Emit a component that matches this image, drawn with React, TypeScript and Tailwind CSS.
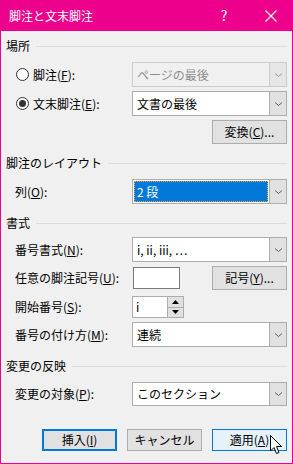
import React from "react"

const font = { fontFamily: '"Noto Sans CJK JP", "Noto Sans", sans-serif' }

function Chevron({ color = "#606060" }: { color?: string }) {
  return (
    <svg width="9" height="6" viewBox="0 0 9 6">
      <path d="M1 1.5 L4.5 4.5 L8 1.5" fill="none" stroke={color} strokeWidth="1" />
    </svg>
  )
}

function Header({ title }: { title: string }) {
  return (
    <div className="flex items-center h-[18px]">
      <span className="text-[12px] leading-none text-black">{title}</span>
      <div className="flex-1 h-px bg-[#dcdcdc] ml-[6px]" />
    </div>
  )
}

function Select({ value, disabled, selected }: { value: string; disabled?: boolean; selected?: boolean }) {
  return (
    <div
      className={
        "w-[155px] h-full flex border " +
        (disabled ? "border-[#cccccc] bg-[#f0f0f0]" : "border-[#adadad] bg-white")
      }
    >
      <div className="flex-1 flex items-center p-[1px]">
        {selected ? (
          <div className="w-full h-full bg-[#0078d7] outline outline-1 outline-dotted outline-[#ff9c40] -outline-offset-1 flex items-center pl-[3px] text-white text-[12px]">
            2 段
          </div>
        ) : (
          <span className={"pl-[3px] text-[12px] " + (disabled ? "text-[#8d8d8d]" : "text-black")}>{value}</span>
        )}
      </div>
      <div
        className={
          "w-[17px] flex items-center justify-center border-l " +
          (disabled ? "bg-[#e6e6e6] border-[#cccccc]" : "bg-[#e1e1e1] border-[#adadad]")
        }
      >
        <Chevron color={disabled ? "#9a9a9a" : "#606060"} />
      </div>
    </div>
  )
}

function Btn({ children, variant }: { children: React.ReactNode; variant?: "default" | "hover" }) {
  const cls =
    variant === "default"
      ? "border-2 border-[#0078d7] bg-[#e1e1e1]"
      : variant === "hover"
      ? "border border-[#0078d7] bg-[#e5f1fb]"
      : "border border-[#adadad] bg-[#e1e1e1]"
  return (
    <div className={"w-[75px] h-full flex items-center justify-center text-[12px] text-black " + cls}>
      {children}
    </div>
  )
}

function Row({ label, children, className = "" }: { label: React.ReactNode; children: React.ReactNode; className?: string }) {
  return (
    <div className={"flex items-center pl-[9px] " + className}>
      <span className="flex-1 text-[12px] text-black">{label}</span>
      {children}
    </div>
  )
}

function Radio({ checked }: { checked?: boolean }) {
  return (
    <div className="w-[13px] h-[13px] rounded-full border border-[#333333] bg-white flex items-center justify-center mr-[4px]">
      {checked && <div className="w-[7px] h-[7px] rounded-full bg-[#333333]" />}
    </div>
  )
}

export default function App() {
  return (
    <div className="w-[293px] h-[464px] flex flex-col relative" style={font}>
      {/* Title bar */}
      <div className="h-[31px] bg-[#ec008c] flex items-center pl-[9px] text-white shrink-0">
        <span className="text-[12px] flex-1">脚注と文末脚注</span>
        <span className="text-[14px] w-[20px] mr-[31px] text-center">?</span>
        <svg width="12" height="12" viewBox="0 0 12 12" className="mr-[16px]">
          <path d="M0.5 0.5 L11.5 11.5 M11.5 0.5 L0.5 11.5" stroke="white" strokeWidth="1.2" />
        </svg>
      </div>

      {/* Body */}
      <div className="flex-1 bg-[#f0f0f0] border-x border-b border-[#ec008c] px-[5px] flex flex-col">
        <div className="mt-[6px]">
          <Header title="場所" />
        </div>

        <div className="flex items-center mt-[7px] h-[25px]">
          <div className="flex-1 flex items-center pl-[10px]">
            <Radio />
            <span className="text-[12px] text-black">
              脚注(<span className="underline">F</span>):
            </span>
          </div>
          <Select value="ページの最後" disabled />
        </div>

        <div className="flex items-center mt-[4px] h-[25px]">
          <div className="flex-1 flex items-center pl-[10px]">
            <Radio checked />
            <span className="text-[12px] text-black">
              文末脚注(<span className="underline">E</span>):
            </span>
          </div>
          <Select value="文書の最後" />
        </div>

        <div className="flex justify-end mt-[4px] h-[24px]">
          <Btn>
            変換(<span className="underline">C</span>)...
          </Btn>
        </div>

        <div className="mt-[10px]">
          <Header title="脚注のレイアウト" />
        </div>

        <Row
          className="mt-[7px] h-[25px]"
          label={
            <>
              列(<span className="underline">O</span>):
            </>
          }
        >
          <Select value="2 段" selected />
        </Row>

        <div className="mt-[10px]">
          <Header title="書式" />
        </div>

        <Row
          className="mt-[5px] h-[25px]"
          label={
            <>
              番号書式(<span className="underline">N</span>):
            </>
          }
        >
          <Select value="i, ii, iii, ⋯" />
        </Row>

        <Row
          className="mt-[4px] h-[24px]"
          label={
            <>
              任意の脚注記号(<span className="underline">U</span>):
            </>
          }
        >
          <div className="w-[155px] h-full flex items-center">
            <div className="w-[47px] h-[22px] ml-[1px] bg-white border border-[#7a7a7a]" />
            <div className="flex-1" />
            <Btn>
              記号(<span className="underline">Y</span>)...
            </Btn>
          </div>
        </Row>

        <Row
          className="mt-[5px] h-[24px]"
          label={
            <>
              開始番号(<span className="underline">S</span>):
            </>
          }
        >
          <div className="w-[155px] h-full flex items-center">
            <div className="w-[52px] h-[22px] bg-white border border-[#adadad] flex">
              <span className="flex-1 text-[12px] text-black pl-[3px] leading-[20px]">i</span>
              <div className="w-[16px] flex flex-col border-l border-[#adadad]">
                <div className="flex-1 bg-[#e1e1e1] border-b border-[#adadad] flex items-center justify-center">
                  <svg width="7" height="4" viewBox="0 0 7 4">
                    <path d="M0 4 L3.5 0 L7 4 Z" fill="#000" />
                  </svg>
                </div>
                <div className="flex-1 bg-[#e1e1e1] flex items-center justify-center">
                  <svg width="7" height="4" viewBox="0 0 7 4">
                    <path d="M0 0 L7 0 L3.5 4 Z" fill="#000" />
                  </svg>
                </div>
              </div>
            </div>
          </div>
        </Row>

        <Row
          className="mt-[3px] h-[25px]"
          label={
            <>
              番号の付け方(<span className="underline">M</span>):
            </>
          }
        >
          <Select value="連続" />
        </Row>

        <div className="mt-[10px]">
          <Header title="変更の反映" />
        </div>

        <Row
          className="mt-[7px] h-[24px]"
          label={
            <>
              変更の対象(<span className="underline">P</span>):
            </>
          }
        >
          <Select value="このセクション" />
        </Row>

        <div className="flex justify-end gap-[10px] mt-[23px] h-[22px]">
          <Btn variant="default">
            挿入(<span className="underline">I</span>)
          </Btn>
          <Btn>キャンセル</Btn>
          <Btn variant="hover">
            適用(<span className="underline">A</span>)
          </Btn>
        </div>
      </div>

      {/* Mouse cursor */}
      <svg width="13" height="20" viewBox="0 0 13 20" className="absolute left-[270px] top-[435px]">
        <path
          d="M0.5 0.5 L0.5 16 L4 12.5 L6.5 18.5 L9 17.5 L6.5 11.5 L11.5 11.5 Z"
          fill="white"
          stroke="black"
          strokeWidth="1"
          strokeLinejoin="miter"
        />
      </svg>
    </div>
  )
}
